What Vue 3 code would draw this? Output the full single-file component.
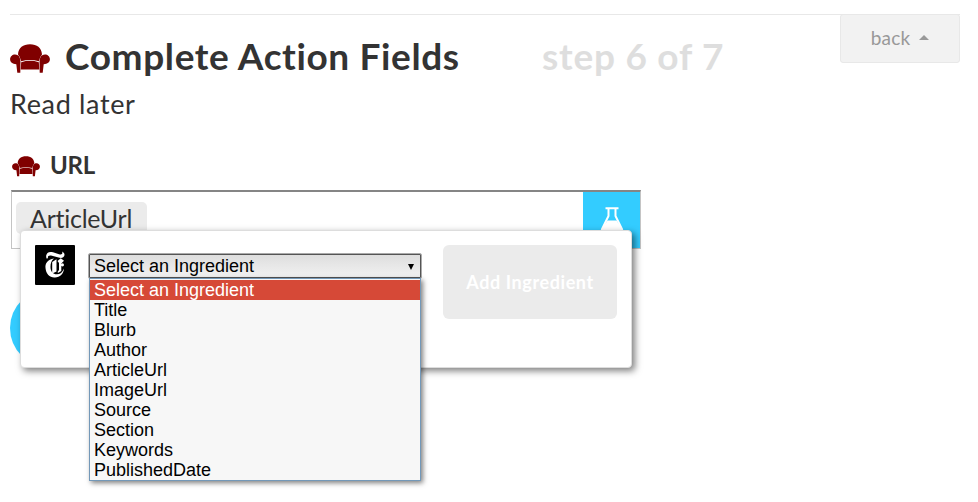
<script setup>
import { ref } from 'vue'

const options = ['Select an Ingredient', 'Title', 'Blurb', 'Author', 'ArticleUrl', 'ImageUrl', 'Source', 'Section', 'Keywords', 'PublishedDate']
const selected = ref(0)
</script>

<template>
  <main class="page">
    <svg width="0" height="0" class="defs" aria-hidden="true">
      <symbol id="chair" viewBox="0 0 40 30">
        <path d="M8 10.500C8.500 3.500 13 .2 20 .2S31.500 3.500 32 10.500Q29.500 13 28.900 17.300Q20 14.500 11.100 17.300Q10.500 13 8 10.500Z" />
        <path d="M11.200 18.200Q20 15.300 28.800 18.200L29.300 25.600H10.700Z" />
        <path d="M5 10.400C9.500 10.400 10.200 14 10.500 18L10.300 28.800H7.300L6.300 20.200C2.400 20 .1 18 .1 15.200C.1 12.500 2.300 10.400 5 10.400Z" />
        <path d="M35 10.400C30.500 10.400 29.800 14 29.500 18L29.700 28.800H32.700L33.700 20.200C37.600 20 39.900 18 39.900 15.200C39.900 12.500 37.700 10.400 35 10.400Z" />
      </symbol>
    </svg>
    <header class="header">
      <svg class="chair-large"><use href="#chair" /></svg>
      <h1 class="title">Complete Action Fields</h1>
      <span class="step">step 6 of 7</span>
      <button class="back"><span>back</span><i class="caret"></i></button>
    </header>
    <p class="subtitle">Read later</p>
    <div class="label">
      <svg class="chair-small"><use href="#chair" /></svg>
      <h2 class="label-text">URL</h2>
    </div>
    <section class="field">
      <div class="input">
        <span class="token">ArticleUrl</span>
        <button class="flask" aria-label="Ingredients">
          <svg width="26" height="30" viewBox="0 0 26 30">
            <path d="M6.500 1.200H19.500M9.500 2V9L3 22Q1.500 27 5 27H21Q24.500 27 23 22L16.500 9V2" fill="none" stroke="#fff" stroke-width="2" />
            <path d="M8.500 13.500H17.500L24 23V28H2V23Z" fill="#fff" />
          </svg>
        </button>
      </div>
      <span class="submit"></span>
      <div class="popup">
        <svg class="times" viewBox="0 0 40 40">
          <rect width="40" height="40" rx="1" fill="#000" />
          <path d="M11.500 13.500C10 8.500 13.500 5.800 18 7.300L24 9.200C27 10 28 8.800 27 6.500C31.500 8.500 29.500 13.700 24.500 12.800L17 10.800C14 10 12.500 11 13 13.200Z" fill="#fff" />
          <path d="M19 13.500C12.500 14.500 10 18.500 10.500 23C11 29 15 33 20 32.500C25 32.200 28.500 29 29 23.500C27.500 27.500 25 29.300 22 29.300C17.500 29.300 15.500 26 15.500 22C15.500 18 16.500 15.500 19 13.500Z" fill="#fff" />
          <path d="M17.200 17L21.500 14.200V26.500L17.200 28.500Z" fill="#fff" />
          <path d="M22.500 16L25.800 13.300L29 15.800L26.300 18.500V26L22.800 28V26.500L24 25V18Z" fill="#fff" />
          <circle cx="27.400" cy="19.800" r="1.600" fill="#fff" />
        </svg>
        <div class="select">
          <div class="select-box"><span>{{ options[selected] }}</span><i class="arrow"></i></div>
          <ul class="menu">
            <li v-for="(option, i) in options" :key="option" :class="{ active: i === selected }" @click="selected = i">{{ option }}</li>
          </ul>
        </div>
        <button class="add">Add Ingredient</button>
      </div>
    </section>
  </main>
</template>

<style>
body { background: #fff; overflow: hidden; }
</style>

<style scoped>
.page { box-sizing: border-box; width: 978px; height: 502px; padding: 14px 18px 0 10px; overflow: hidden; color: #333; font-family: Lato, sans-serif; font-variant-ligatures: none; }
.page * { box-sizing: border-box; }
.defs { display: block; }
button { font: inherit; border: 0; padding: 0; margin: 0; }
.header { display: flex; align-items: flex-start; height: 70px; border-top: 1px solid #e8e8e8; }
.chair-large { width: 40px; height: 30px; margin-top: 29px; fill: #800000; }
.title { margin: 17px 0 0 15px; width: 477px; font-size: 37px; line-height: 48px; font-weight: 700; white-space: nowrap; letter-spacing: .62px; }
.step { margin-top: 17px; font-size: 37px; line-height: 48px; font-weight: 700; color: #dedede; letter-spacing: .75px; }
.back { display: flex; align-items: center; justify-content: center; gap: 9px; width: 120px; height: 49px; margin: -1px 0 0 auto; padding-bottom: 3px; border: 1px solid #e8e8e8; border-radius: 3px; background: #f2f2f2; color: #999; font-size: 19px; letter-spacing: .2px; }
.caret { border: 5px solid transparent; border-top: 0; border-bottom-color: #999; }
.subtitle { margin: 0; height: 70px; font-size: 27px; line-height: 40px; letter-spacing: .65px; }
.label { display: flex; height: 36px; padding-left: 2px; }
.chair-small { width: 28px; height: 21px; margin-top: 2px; fill: #800000; }
.label-text { margin: -4px 0 0 10px; font-size: 24px; line-height: 30px; letter-spacing: -.3px; }
.field { position: relative; height: 300px; }
.input { display: flex; align-items: flex-start; width: 630px; height: 59px; margin-left: 1px; border: 1px solid #c4c4c4; border-top: 2px solid #858585; }
.token { width: 131px; height: 32px; margin: 10px 0 0 4px; padding-left: 14px; border-radius: 5px; background: #ebebeb; font-size: 25px; line-height: 33px; letter-spacing: -.25px; }
.flask { display: flex; justify-content: center; width: 57px; height: 56px; margin-left: auto; padding-top: 15px; background: #3cf; }
.submit { display: block; width: 78px; height: 78px; margin-top: 40px; border-radius: 50%; background: #3cf; }
.popup { position: absolute; left: 10px; top: 40px; display: flex; width: 612px; height: 138px; padding: 14px; border: 1px solid #ddd; border-radius: 4px; background: #fff; box-shadow: 3px 3px 7px rgba(0,0,0,.5); }
.times { width: 40px; height: 40px; }
.select { width: 334px; height: 228px; margin: 8px 0 0 13px; font-family: "Liberation Sans", sans-serif; font-size: 18px; color: #000; }
.select-box { display: flex; align-items: center; justify-content: space-between; height: 26px; padding: 1px 7px 0 5px; border: 1px solid #aaa; border-radius: 2px; background: linear-gradient(#ddd, #f2f2f2); box-shadow: inset 0 0 0 1px #555; }
.arrow { border: 3px solid transparent; border-top: 6px solid #000; border-bottom: 0; }
.menu { position: relative; width: 332px; height: 203px; margin: -1px 0 0 1px; padding: 1px 0 0; list-style: none; border: 1px solid #7398b8; background: #f7f7f7; box-shadow: 2px 2px 5px rgba(0,0,0,.5); }
.menu li { height: 20px; padding-left: 4px; line-height: 20px; }
.menu .active { background: #d64937; color: #fff; }
.add { width: 174px; height: 74px; margin-left: 21px; border-radius: 6px; background: #ebebeb; color: #fff; font-size: 18px; font-weight: 700; letter-spacing: .6px; }
</style>
